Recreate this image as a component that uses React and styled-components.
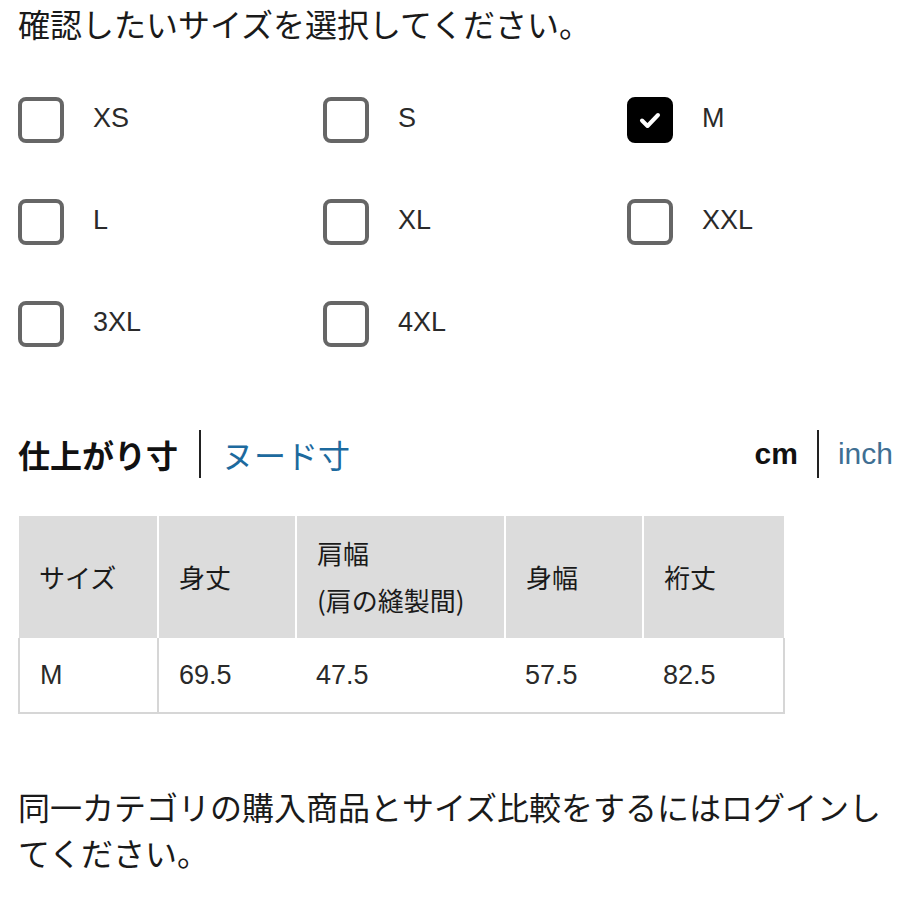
import React, { useState } from "react";
import styled, { createGlobalStyle } from "styled-components";

const Global = createGlobalStyle`
body{
margin:0;
background:#fff;
font-family:"Noto Sans CJK JP", "Noto Sans", sans-serif;
color:#1a1a1a;
}
`

const latin = `"Liberation Sans", "Noto Sans CJK JP", sans-serif`

const Page = styled.div`
padding:0 7px 0 18px;
`

const Title = styled.h1`
margin:0;
font-size:32px;
font-weight:400;
line-height:46px;
color:#1a1a1a;
`

const SizeGrid = styled.div`
display:grid;
grid-template-columns:305px 304px 1fr;
grid-auto-rows:102px;
margin-top:23px;
`

const SizeOption = styled.label`
display:flex;
align-items:center;
gap:29px;
cursor:pointer;
`

const Box = styled.span`
box-sizing:border-box;
flex:none;
width:46px;
height:46px;
border-radius:8px;
border:4px solid ${p => p.checked ? "#000" : "#666"};
background:${p => p.checked ? "#000" : "#fff"};
display:flex;
align-items:center;
justify-content:center;
`

const SizeLabel = styled.span`
font-family:${latin};
font-size:27px;
color:#2a2a2a;
margin-top:-3px;
`

const Tabs = styled.div`
display:flex;
align-items:center;
justify-content:space-between;
height:48px;
margin-top:55px;
`

const TabGroup = styled.div`
display:flex;
align-items:center;
height:100%;
`

const Tab = styled.span`
font-family:${p => p.small ? latin : "inherit"};
font-size:${p => p.small ? "30px" : "32px"};
font-weight:${p => p.active ? 700 : 400};
color:${p => p.active ? "#111" : p.muted ? "#3f6f93" : "#1d6a9e"};
line-height:48px;
`

const Divider = styled.span`
width:2px;
height:48px;
background:#222;
margin:0 ${p => p.narrow ? "19px" : "21px"};
`

const Table = styled.table`
margin-top:38px;
border-collapse:collapse;
width:765px;
table-layout:fixed;
`

const Th = styled.th`
background:#dcdcdc;
font-size:26px;
font-weight:400;
text-align:left;
line-height:47px;
padding:13px 18px 15px 20px;
height:122px;
box-sizing:border-box;
border-left:2px solid #fff;
&:first-child{border-left:none;}
`

const Td = styled.td`
font-family:${latin};
font-size:27px;
color:#2a2a2a;
padding:0 20px;
height:74px;
border-bottom:2px solid #d6d6d6;
&:first-child{border-left:2px solid #d6d6d6;border-right:2px solid #d6d6d6;}
&:last-child{border-right:2px solid #d6d6d6;}
`

const Note = styled.p`
margin:69px 9px 0 0;
font-size:32px;
line-height:46px;
color:#1a1a1a;
`

const sizes = ["XS", "S", "M", "L", "XL", "XXL", "3XL", "4XL"]
const cols = [139, 138, 209, 138, 141]

const App = () => {
  const [selected, setSelected] = useState(["M"])

  const toggle = (s) => {
    setSelected(selected.includes(s) ? selected.filter(x => x !== s) : [...selected, s])
  }

  return (
    <Page>
      <Global />
      <Title>確認したいサイズを選択してください。</Title>
      <SizeGrid>
        {sizes.map(s => (
          <SizeOption key={s} onClick={() => toggle(s)}>
            <Box checked={selected.includes(s)}>
              {selected.includes(s) &&
                <svg width="26" height="26" viewBox="0 0 26 26">
                  <polyline points="5,13.5 10.5,19 21,8" fill="none" stroke="#fff" strokeWidth="4" strokeLinecap="round" strokeLinejoin="round" />
                </svg>}
            </Box>
            <SizeLabel>{s}</SizeLabel>
          </SizeOption>
        ))}
      </SizeGrid>
      <Tabs>
        <TabGroup>
          <Tab active>仕上がり寸</Tab>
          <Divider />
          <Tab>ヌード寸</Tab>
        </TabGroup>
        <TabGroup>
          <Tab active small>cm</Tab>
          <Divider narrow />
          <Tab small muted>inch</Tab>
        </TabGroup>
      </Tabs>
      <Table>
        <colgroup>
          {cols.map((w, i) => <col key={i} style={{ width: w }} />)}
        </colgroup>
        <thead>
          <tr>
            <Th>サイズ</Th>
            <Th>身丈</Th>
            <Th>肩幅<br />(肩の縫製間)</Th>
            <Th>身幅</Th>
            <Th>裄丈</Th>
          </tr>
        </thead>
        <tbody>
          <tr>
            <Td>M</Td>
            <Td>69.5</Td>
            <Td>47.5</Td>
            <Td>57.5</Td>
            <Td>82.5</Td>
          </tr>
        </tbody>
      </Table>
      <Note>同一カテゴリの購入商品とサイズ比較をするにはログインしてください。</Note>
    </Page>
  )
}

export default App
